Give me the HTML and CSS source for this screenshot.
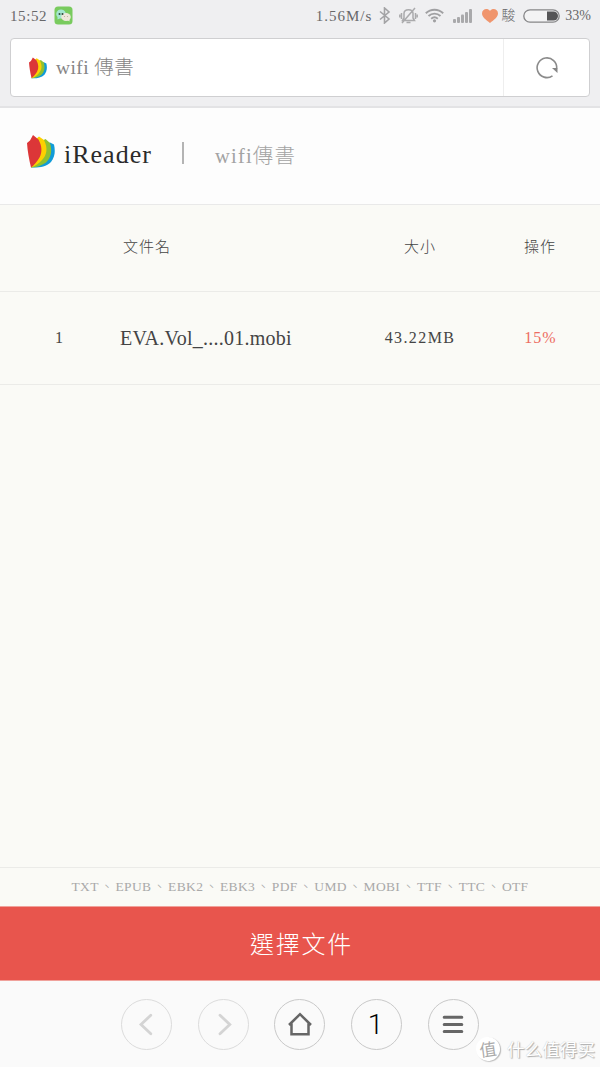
FILE: index.html
```html
<!DOCTYPE html>
<html lang="zh-Hant">
<head>
<meta charset="utf-8">
<title>wifi 傳書</title>
<link rel="stylesheet" href="styles.css">
</head>
<body>
<svg class="defs" width="0" height="0" aria-hidden="true">
  <symbol id="logo" viewBox="0 0 28 33">
    <path fill="#109bd8" d="M21 8.500l2-1 4 2C28.500 16 28 22 24 27c-5 5-13 6-20 5.500z"/>
    <path fill="#8fc031" d="M15 6l3.500-2 4.500 4c2.500 8 1 14.500-4 19.500-4 3-10 5-15 5z"/>
    <path fill="#fdd000" d="M9 4l3-2.500L17 5c4 8 3 15-2 20-3 3.500-7 6-11 7.500z"/>
    <path fill="#dc3638" d="M0 8l3-2.500L6 0l5.500 4.500C15 11 15.500 17 12.500 22.500 10.500 26 7 30 4 32.500 2 24 .5 16 0 8z"/>
  </symbol>
</svg>
<header class="top">
  <div class="status">
    <span class="time">15:52</span>
    <svg class="chat" width="20" height="20" viewBox="0 0 20 20">
      <rect x=".5" y=".5" width="18" height="18" rx="3.500" fill="#79cb5e"/>
      <path fill="#a3e6cf" d="M7.500 3.500a5 4.500 0 1 1-1.500 9L3.500 13.500V11a4.500 4.500 0 0 1 4-7.500z"/>
      <ellipse cx="12" cy="11" rx="4.800" ry="4" fill="#eee8db"/>
      <path fill="#eee8db" d="M13 14l2.500 1.500V13z"/>
      <g fill="#314a3b"><circle cx="5.500" cy="8" r="1"/><circle cx="8.500" cy="8" r="1"/></g>
      <g fill="#b5ad9d"><circle cx="10.500" cy="10.500" r=".6"/><circle cx="13.500" cy="10.500" r=".6"/></g>
    </svg>
    <span class="speed">1.56M/s</span>
    <svg class="bt" width="12" height="17" viewBox="0 0 12 17" fill="none" stroke="#a3a3a5" stroke-width="1.600"><path d="M1 4.500l9 7.500-4.500 4V1L10 5 1 12.500"/></svg>
    <svg class="mute" width="19" height="18" viewBox="0 0 19 18" fill="none" stroke="#aaaaac" stroke-width="1.500"><path d="M3.500 13.500h12l-1.500-2.500V6.500C14 1.500 5 1.500 5 6.500V11zM7.500 15.500h4M3 16L16 1M2.500 6v6M.8 7.500v3M16.500 6v6M18.200 7.500v3"/></svg>
    <svg class="wifi" width="19" height="15" viewBox="0 0 19 15" fill="none" stroke="#a0a0a2" stroke-width="1.900"><path d="M.8 5.200c5-4.700 12.400-4.700 17.400 0M3.500 8c3.500-3.200 8.500-3.200 12 0M6.200 10.700c2-1.700 4.600-1.700 6.600 0"/><circle cx="9.500" cy="12.800" r="1.600" fill="#a0a0a2" stroke="none"/></svg>
    <svg class="signal" width="20" height="14" viewBox="0 0 20 14" fill="#a9a9ab"><rect y="10" width="3" height="4" rx="1"/><rect x="4" y="8" width="3" height="6" rx="1"/><rect x="8" y="5.500" width="3" height="8.500" rx="1"/><rect x="12" y="3" width="3" height="11" rx="1"/><rect x="16" width="3" height="14" rx="1"/></svg>
    <svg class="heart" width="16" height="14" viewBox="0 0 16 14"><path fill="#f0956d" d="M8 14C4 11 0 8 0 4.500 0 0 5.500-1.500 8 2c2.500-3.500 8-2 8 2.500C16 8 12 11 8 14z"/></svg>
    <span class="carrier">駿</span>
    <svg class="battery" width="37" height="14" viewBox="0 0 37 14"><rect x=".8" y=".8" width="35.400" height="12.400" rx="6.200" fill="#f3f3f4" stroke="#858587" stroke-width="1.300"/><path fill="#555557" d="M24 2.500h6.500a4.500 4.500 0 0 1 0 9H24z"/></svg>
    <span class="percent">33%</span>
  </div>
  <div class="address">
    <svg class="favicon" width="18" height="22"><use href="#logo"/></svg>
    <span class="page-title">wifi 傳書</span>
    <span class="reload"><svg width="24" height="24" viewBox="0 0 24 24"><path d="M17.500 19.800A9.800 9.800 0 1 1 21.700 12.500" fill="none" stroke="#8b8b8b" stroke-width="1.600"/><path d="M17 12h5.500v5z" fill="#858585"/></svg></span>
  </div>
</header>
<section class="brand">
  <svg class="brand-logo" width="28" height="33"><use href="#logo"/></svg>
  <h1 class="brand-name">iReader</h1>
  <span class="divider"></span>
  <span class="subtitle">wifi傳書</span>
</section>
<main class="files">
  <div class="row head"><span></span><span class="name">文件名</span><span class="size">大小</span><span class="action">操作</span></div>
  <div class="row item"><span class="index">1</span><span class="name">EVA.Vol_....01.mobi</span><span class="size">43.22MB</span><span class="action">15%</span></div>
</main>
<div class="formats">TXT<i>、</i>EPUB<i>、</i>EBK2<i>、</i>EBK3<i>、</i>PDF<i>、</i>UMD<i>、</i>MOBI<i>、</i>TTF<i>、</i>TTC<i>、</i>OTF</div>
<button class="choose">選擇文件</button>
<nav class="toolbar">
  <span class="key off"><svg width="24" height="24" viewBox="0 0 24 24" fill="none" stroke="#d4d4d4" stroke-width="2.800" stroke-linecap="round"><path d="M15.800 3.200L6 12.500l9.800 9.300"/></svg></span>
  <span class="key off"><svg width="24" height="24" viewBox="0 0 24 24" fill="none" stroke="#d4d4d4" stroke-width="2.800" stroke-linecap="round"><path d="M9 3.200l9.800 9.300L9 21.800"/></svg></span>
  <span class="key"><svg width="24" height="24" viewBox="0 0 24 24" fill="none" stroke="#666" stroke-width="2.500"><path d="M1 13L12 2.200 23 13M3.500 11.500v10.700h17V11.500"/></svg></span>
  <span class="key tabs">1</span>
  <span class="key"><svg width="24" height="24" viewBox="0 0 24 24" stroke="#666" stroke-width="3" stroke-linecap="round"><path d="M3.200 5.300h17.600M3.200 12.500h17.600M3.200 19.600h17.600"/></svg></span>
  <span class="watermark"><b>值</b><span>什么值得买</span></span>
</nav>
</body>
</html>
```
FILE: styles.css
```css
* { box-sizing: border-box; }
body {
  margin: 0;
  width: 600px;
  height: 1067px;
  display: flex;
  flex-direction: column;
  overflow: hidden;
  background: #fafaf6;
  color: #444;
  font-family: "Liberation Serif", "Noto Sans CJK TC", serif;
  font-weight: 300;
  white-space: nowrap;
}
svg { display: block; flex: none; }
.defs { position: absolute; }
.top { height: 108px; flex: none; background: #efeff1; border-bottom: 2px solid #e3e3e5; }
.status { height: 38px; padding: 0 9px 7px 10px; display: flex; align-items: center; font-size: 15px; line-height: 20px; color: #68686a; }
.time { width: 44px; letter-spacing: .6px; }
.speed { margin-left: 242px; width: 64px; letter-spacing: 1px; }
.mute { margin-left: 8px; }
.wifi { margin-left: 7px; }
.signal { margin-left: 9px; }
.heart { margin-left: 9px; }
.carrier { margin-left: 3px; width: 22px; font-size: 14px; }
.battery { margin-right: 5px; }
.percent { font-size: 14px; }
.address { height: 59px; margin: 0 10px; padding-left: 18px; display: flex; align-items: center; background: #fff; border: 1px solid #cfcfd1; border-radius: 4px; }
.page-title { margin-left: 9px; font-size: 19.5px; line-height: 26px; letter-spacing: .4px; color: #858585; }
.reload { margin-left: auto; width: 86px; height: 57px; border-left: 1px solid #eee; display: grid; place-items: center; }
.brand { height: 97px; flex: none; padding: 0 0 3px 27px; display: flex; align-items: center; background: #fdfdfd; border-bottom: 1px solid #e9e9e9; }
.brand-logo { margin-bottom: 7px; }
.brand-name { margin: 0 0 0 9px; width: 118px; font-size: 26px; font-weight: 400; line-height: 32px; letter-spacing: 1px; color: #2b2b2b; }
.divider { width: 2px; height: 22px; margin-bottom: 3px; background: #b4b4b4; }
.subtitle { margin: 2px 0 0 31px; font-size: 20.5px; line-height: 28px; letter-spacing: 1.200px; color: #a3a3a3; }
.files { flex: 1; }
.row { display: grid; grid-template-columns: 120px 240px 120px 120px; align-items: center; border-bottom: 1px solid #ebebe8; font-size: 16px; }
.head { height: 87px; padding-bottom: 5px; font-size: 15px; letter-spacing: 1px; }
.head .name { padding-left: 3px; }
.item { height: 93px; }
.index { padding-left: 55px; }
.item .name { font-size: 20px; letter-spacing: .25px; }
.size, .action { text-align: center; }
.item .size { letter-spacing: 1.400px; }
.item .action { padding-left: 1px; color: #ed6c62; letter-spacing: 1px; }
.formats { height: 39px; flex: none; border-top: 1px solid #ebebe8; text-align: center; font-size: 13.5px; line-height: 37px; letter-spacing: .35px; color: #a9a9a9; }
.formats i { display: inline-block; width: 16.700px; font-style: normal; text-align: center; }
.choose { height: 75px; flex: none; padding: 0 0 3px 3px; border: 0; border-top: 1px solid #f0a29b; border-bottom: 1px solid #f0a29b; background: #e8554d; color: #fff; font: inherit; font-size: 24px; letter-spacing: 1.700px; }
.toolbar { position: relative; height: 86px; flex: none; padding-left: 121px; display: flex; align-items: center; gap: 25.700px; background: #fafafa; }
.key { width: 51px; height: 51px; border: 1px solid #c9c9c9; border-radius: 50%; display: grid; place-items: center; }
.off { border-color: #dcdcdc; }
.tabs { padding-right: 2px; font: 300 28px/49px Roboto, sans-serif; color: #000; }
.watermark { position: absolute; left: 476px; top: 55px; display: flex; align-items: center; gap: 7px; font: 400 17.600px/26px "Noto Sans CJK SC", sans-serif; color: #fff; text-shadow: 1px 1px 1px #aaa, 0 0 1px #bbb; }
.watermark b { width: 24px; height: 24px; border-radius: 50%; background: #fff; box-shadow: 1px 1px 1px #bbb; font-size: 17px; font-weight: 400; line-height: 23px; text-align: center; color: #aaa; text-shadow: none; transform: rotate(-8deg); }
```
